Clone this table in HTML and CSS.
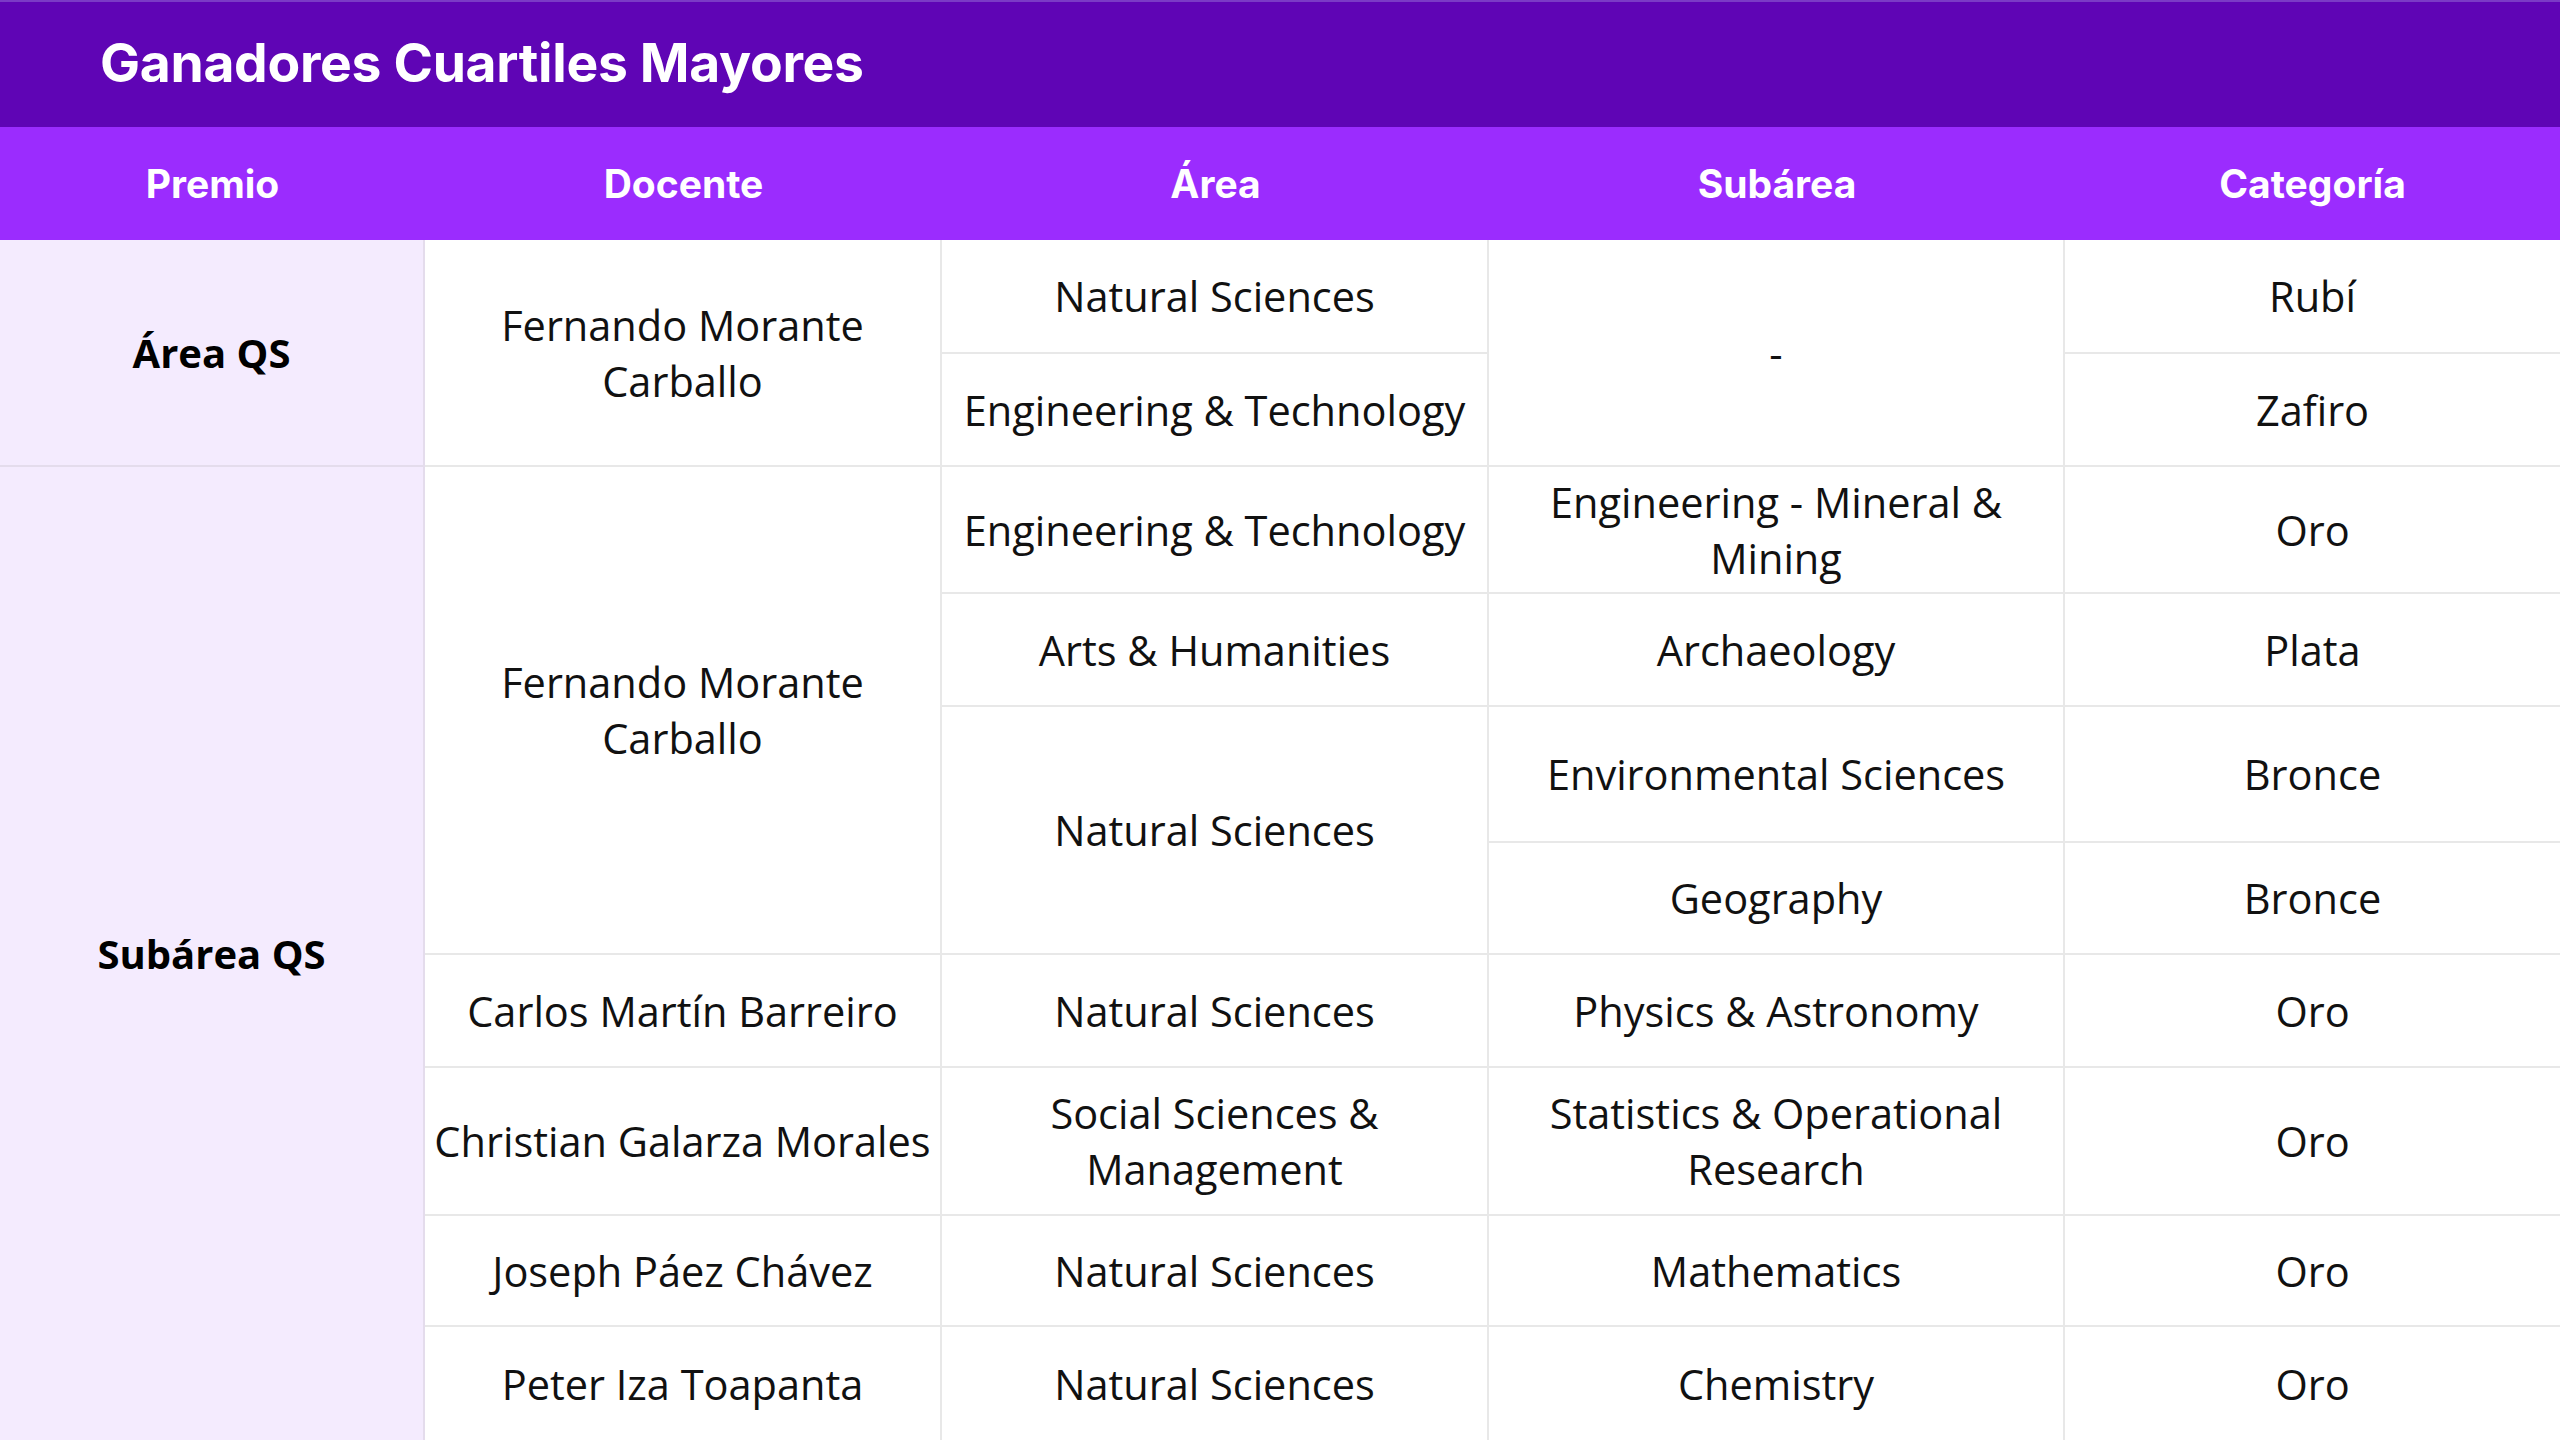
FILE: index.html
```html
<!DOCTYPE html>
<html lang="es">
<head>
<meta charset="utf-8">
<title>Ganadores Cuartiles Mayores</title>
<link rel="stylesheet" href="styles.css">
</head>
<body>
<div class="page">
  <header class="titlebar"><h1 class="title">Ganadores Cuartiles Mayores</h1></header>
  <div class="thead">
    <div class="th">Premio</div>
    <div class="th">Docente</div>
    <div class="th">Área</div>
    <div class="th">Subárea</div>
    <div class="th">Categoría</div>
  </div>
  <div class="tbody">
    <div class="cell prize r1-2 c1">Área QS</div>
    <div class="cell r1-2 c2">Fernando Morante<br>Carballo</div>
    <div class="cell r1 c3">Natural Sciences</div>
    <div class="cell r1-2 c4">-</div>
    <div class="cell r1 c5">Rubí</div>
    <div class="cell r2 c3">Engineering &amp; Technology</div>
    <div class="cell r2 c5">Zafiro</div>

    <div class="cell prize r3-10 c1">Subárea QS</div>
    <div class="cell r3-6 c2">Fernando Morante<br>Carballo</div>
    <div class="cell r3 c3">Engineering &amp; Technology</div>
    <div class="cell r3 c4">Engineering - Mineral &amp;<br>Mining</div>
    <div class="cell r3 c5">Oro</div>
    <div class="cell r4 c3">Arts &amp; Humanities</div>
    <div class="cell r4 c4">Archaeology</div>
    <div class="cell r4 c5">Plata</div>
    <div class="cell r5-6 c3">Natural Sciences</div>
    <div class="cell r5 c4">Environmental Sciences</div>
    <div class="cell r5 c5">Bronce</div>
    <div class="cell r6 c4">Geography</div>
    <div class="cell r6 c5">Bronce</div>

    <div class="cell r7 c2">Carlos Martín Barreiro</div>
    <div class="cell r7 c3">Natural Sciences</div>
    <div class="cell r7 c4">Physics &amp; Astronomy</div>
    <div class="cell r7 c5">Oro</div>

    <div class="cell r8 c2">Christian Galarza Morales</div>
    <div class="cell r8 c3">Social Sciences &amp;<br>Management</div>
    <div class="cell r8 c4">Statistics &amp; Operational<br>Research</div>
    <div class="cell r8 c5">Oro</div>

    <div class="cell r9 c2">Joseph Páez Chávez</div>
    <div class="cell r9 c3">Natural Sciences</div>
    <div class="cell r9 c4">Mathematics</div>
    <div class="cell r9 c5">Oro</div>

    <div class="cell r10 c2">Peter Iza Toapanta</div>
    <div class="cell r10 c3">Natural Sciences</div>
    <div class="cell r10 c4">Chemistry</div>
    <div class="cell r10 c5">Oro</div>
  </div>
</div>
</body>
</html>
```

FILE: styles.css
```css
* { box-sizing: border-box; }
html, body { margin: 0; padding: 0; background: #ffffff; }
body { font-family: "Open Sans", "Noto Sans", sans-serif; color: #111; }

.page { width: 2560px; height: 1440px; overflow: hidden; display: flex; flex-direction: column; }

.titlebar {
  height: 127px;
  background: #5f05b5;
  border-top: 2px solid #7b3bc6;
  display: flex;
  align-items: center;
  padding-left: 100px;
  padding-bottom: 5px;
}
.title {
  margin: 0;
  font-family: "Inter", "Open Sans", sans-serif;
  font-weight: 700;
  font-size: 53.4px;
  color: #ffffff;
  letter-spacing: -0.3px;
}

.thead {
  height: 113px;
  background: #9b2cfe;
  display: grid;
  grid-template-columns: 425px 517px 547px 576px 495px;
}
.th {
  display: flex;
  align-items: center;
  justify-content: center;
  font-family: "Inter", "Open Sans", sans-serif;
  font-weight: 700;
  font-size: 39px;
  color: #ffffff;
}

.tbody {
  display: grid;
  grid-template-columns: 425px 517px 547px 576px 495px;
  grid-template-rows: 114px 113px 127px 113px 136px 112px 113px 148px 111px 113px;
}
.cell {
  display: flex;
  align-items: center;
  justify-content: center;
  text-align: center;
  font-size: 41.5px;
  line-height: 56px;
  color: #111;
  border-right: 2px solid #e8e8e8;
  border-bottom: 2px solid #e8e8e8;
  padding: 0 6px;
}
.prize {
  background: #f4ebfe;
  font-weight: 700;
  font-size: 40px;
  color: #000;
  border-right-color: #e4dcec;
  border-bottom-color: #e4dcec;
}
.c5 { border-right: none; }

.c1 { grid-column: 1; }
.c2 { grid-column: 2; }
.c3 { grid-column: 3; }
.c4 { grid-column: 4; }
.c5 { grid-column: 5; }

.r1 { grid-row: 1; }
.r2 { grid-row: 2; }
.r3 { grid-row: 3; }
.r4 { grid-row: 4; }
.r5 { grid-row: 5; }
.r6 { grid-row: 6; }
.r7 { grid-row: 7; }
.r8 { grid-row: 8; }
.r9 { grid-row: 9; }
.r10 { grid-row: 10; border-bottom: none; }
.r1-2 { grid-row: 1 / 3; }
.r3-6 { grid-row: 3 / 7; }
.r5-6 { grid-row: 5 / 7; }
.r3-10 { grid-row: 3 / 11; border-bottom: none; }
```
